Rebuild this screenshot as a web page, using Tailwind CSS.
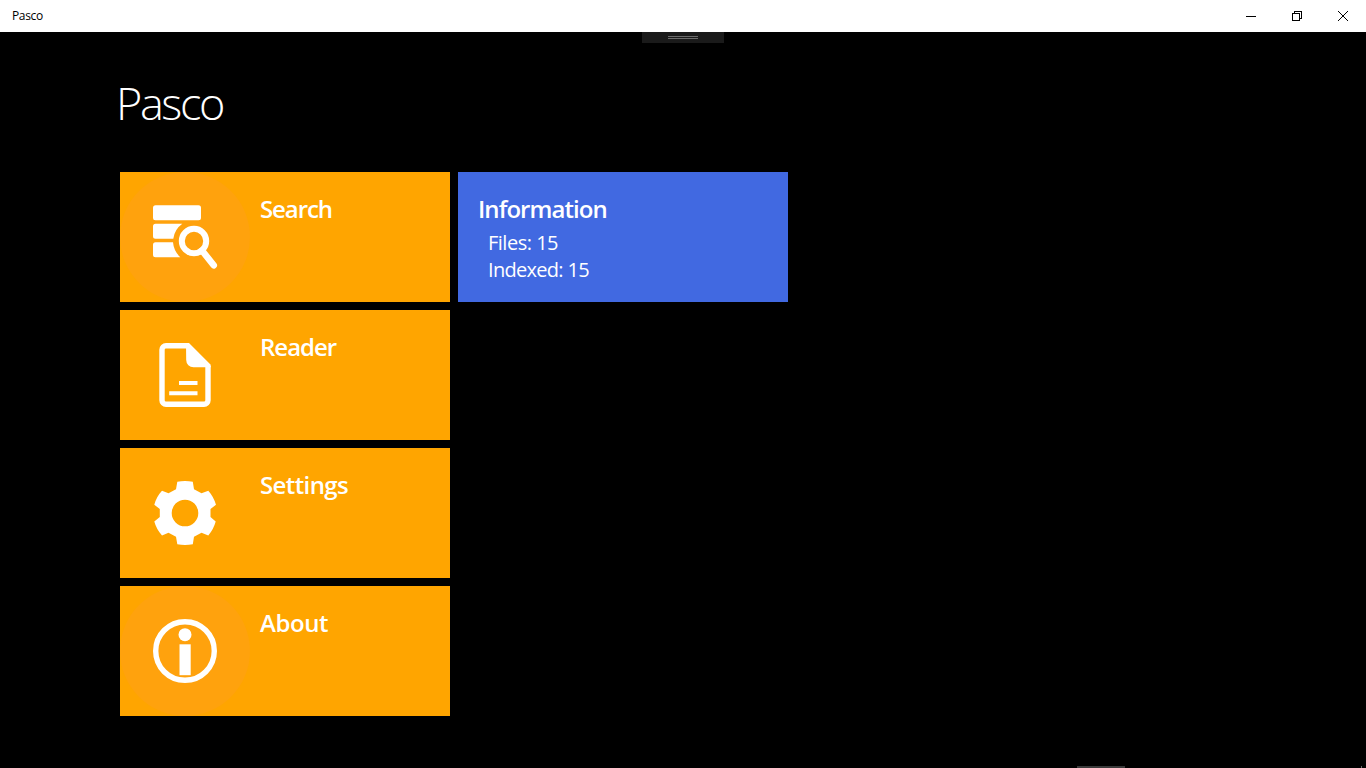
<!DOCTYPE html>
<html lang="en">
<head>
    <meta charset="UTF-8">
    <meta name="viewport" content="width=device-width, initial-scale=1.0">
    <title>Pasco</title>
    <script src="https://cdn.jsdelivr.net/npm/@tailwindcss/browser@4"></script>
</head>
<body class="relative h-screen overflow-hidden bg-black text-white font-['Open_Sans','Noto_Sans',sans-serif]">
    <!-- Title bar -->
    <header class="flex h-8 items-center justify-between bg-white pl-3 text-black">
        <span class="text-[12px] leading-4 tracking-[-0.35px]">Pasco</span>
        <div class="flex">
            <svg class="h-8 w-[46px]" viewBox="0 0 46 32" shape-rendering="crispEdges"><path d="M18 16h10v1h-10z"/></svg>
            <svg class="h-8 w-[46px]" viewBox="0 0 46 32" fill="none" stroke="#000" shape-rendering="crispEdges"><path d="M18.5 13.5h7v7h-7zM20.5 13v-1.500h7v7h-2"/></svg>
            <svg class="h-8 w-[46px]" viewBox="0 0 46 32" fill="none" stroke="#000"><path d="M18 11l10 10M28 11l-10 10"/></svg>
        </div>
    </header>

    <!-- Pull handle -->
    <div class="absolute left-[642px] top-8 flex h-[11px] w-[82px] flex-col items-center gap-px bg-[#1a1a1a] pt-1">
        <div class="h-px w-[30px] bg-[#6b6b6b]"></div>
        <div class="h-px w-[30px] bg-[#6b6b6b]"></div>
    </div>

    <main class="pl-[120px]">
        <h1 class="-ml-1 flex h-[140px] items-center pt-px text-[45px] font-light leading-none tracking-[-2.4px]">Pasco</h1>

        <div class="flex items-start gap-2">
            <nav class="flex flex-col gap-2">
                <a class="flex h-[130px] w-[330px] gap-[10px] bg-[#ffa500]">
                    <svg class="size-[130px]" viewBox="0 0 130 130">
                        <circle cx="65" cy="65" r="65" fill="#ffa20d"/>
                        <g fill="#fff">
                            <rect x="33" y="33.300" width="48" height="15" rx="2.500"/>
                            <path d="M35.500 51.700H62.300A22 22 0 0 0 53.300 66.700H35.500a2.500 2.500 0 0 1-2.500-2.500v-10a2.500 2.500 0 0 1 2.500-2.500z"/>
                            <path d="M35.500 70.300H53A23 23 0 0 0 60.300 85.200H35.500a2.500 2.500 0 0 1-2.500-2.500v-9.900a2.500 2.500 0 0 1 2.500-2.500z"/>
                        </g>
                        <circle cx="74" cy="69" r="12.200" fill="none" stroke="#fff" stroke-width="6"/>
                        <path d="M82 78.500L93.700 93.300" stroke="#fff" stroke-width="6.600" stroke-linecap="round"/>
                    </svg>
                    <span class="pt-[21px] text-[24px] font-semibold leading-8 tracking-[-1.1px]">Search</span>
                </a>
                <a class="flex h-[130px] w-[330px] gap-[10px] bg-[#ffa500]">
                    <svg class="size-[130px]" viewBox="0 0 130 130">
                        <path d="M67.500 35.700H46a4 4 0 0 0-4 4V90.300a4 4 0 0 0 4 4H84a4 4 0 0 0 4-4V56" fill="none" stroke="#fff" stroke-width="5.400"/>
                        <path d="M66 33H69L90.700 54.700V57.300H73.500a7.300 7.300 0 0 1-7.300-7.300z" fill="#fff"/>
                        <path d="M59 71h18.500v4H59zM49.200 81.200h28.300v4H49.200z" fill="#fff"/>
                    </svg>
                    <span class="pt-[21px] text-[24px] font-semibold leading-8 tracking-[-1px]">Reader</span>
                </a>
                <a class="flex h-[130px] w-[330px] gap-[10px] bg-[#ffa500]">
                    <svg class="size-[130px]" viewBox="0 0 130 130">
                        <path fill="#fff" fill-rule="evenodd" d="M57.300 33.700Q65 32.300 72.800 33.700L74 41.300L81.500 45.300L88.300 42.700Q93.500 48.500 96 56.700L90.500 61V69L95.700 73.500Q93.500 81.500 88.300 87.400L81.500 84.700L74 88.800L72.800 96.300Q65 97.700 57.300 96.300L56 88.800L48.500 84.700L42 87.400Q36.500 81.500 34.300 73.500L39.800 69V61L34.300 56.700Q36.500 48.500 42 42.700L48.500 45.300L56 41.300zM65 51.700a13.300 13.300 0 1 0 0 26.600a13.300 13.300 0 1 0 0-26.600z"/>
                    </svg>
                    <span class="pt-[21px] text-[24px] font-semibold leading-8 tracking-[-0.6px]">Settings</span>
                </a>
                <a class="flex h-[130px] w-[330px] gap-[10px] bg-[#ffa500]">
                    <svg class="size-[130px]" viewBox="0 0 130 130">
                        <circle cx="65" cy="65" r="65" fill="#ffa20d"/>
                        <circle cx="65" cy="65" r="29.300" fill="none" stroke="#fff" stroke-width="5.400"/>
                        <circle cx="65" cy="48.700" r="6.500" fill="#fff"/>
                        <path d="M59.500 58.300h11.200v30.900H59.500z" fill="#fff"/>
                    </svg>
                    <span class="pt-[21px] text-[24px] font-semibold leading-8 tracking-[-0.4px]">About</span>
                </a>
            </nav>

            <section class="h-[130px] w-[330px] bg-[#4169e1] pl-5 pt-[21px]">
                <h2 class="text-[24px] font-semibold leading-8 tracking-[-0.95px]">Information</h2>
                <div class="pl-[10px] pt-1 text-[20px] leading-[27px]">
                    <p class="tracking-[-0.5px]">Files: 15</p>
                    <p class="tracking-[-0.7px]">Indexed: 15</p>
                </div>
            </section>
        </div>
    </main>

    <!-- Bottom edge markers -->
    <div class="absolute bottom-0 left-[1077px] h-0.5 w-12 bg-[#3a3a3a]"></div>
    <div class="absolute bottom-0 left-[1361px] h-0.5 w-px bg-[#6b6b6b]"></div>
</body>
</html>
